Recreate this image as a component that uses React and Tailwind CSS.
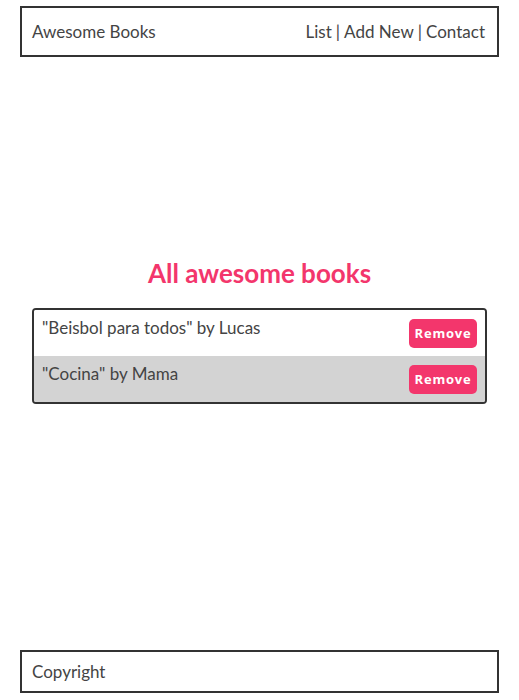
const BOOKS = [
  { title: "Beisbol para todos", author: "Lucas" },
  { title: "Cocina", author: "Mama" },
];

export default function App() {
  return (
    <div className="min-h-[700px] flex flex-col px-5 text-[#444] bg-white" style={{ fontFamily: "Lato, 'Open Sans', sans-serif" }}>
      <header className="mt-1.5 h-[51px] border-2 border-[#333] flex items-center justify-between pl-[10px] pr-[12px] text-[17px]">
        <span>Awesome Books</span>
        <nav className="flex items-center gap-[4px]">
          <a href="#">List</a>
          <span>|</span>
          <a href="#">Add New</a>
          <span>|</span>
          <a href="#">Contact</a>
        </nav>
      </header>

      <main className="flex-1 flex flex-col items-center pt-[200px] px-3">
        <h1 className="text-[26px] leading-8 font-bold text-[#f3366c]">All awesome books</h1>
        <ul className="mt-[19px] w-full border-2 border-[#333] rounded-[4px] overflow-hidden">
          {BOOKS.map((b, i) => (
            <li key={b.title} className={`flex items-start justify-between px-2 py-2 h-[46px] ${i % 2 ? "bg-[#d3d3d3]" : "bg-white"}`}>
              <p className="text-[17px] leading-6 -mt-[2px]">"{b.title}" by {b.author}</p>
              <button className="mt-px h-[29px] w-[68px] rounded-[5px] bg-[#f3366c] text-white text-[13px] font-bold tracking-[0.8px]" style={{ fontFamily: "'Open Sans', sans-serif" }}>
                Remove
              </button>
            </li>
          ))}
        </ul>
      </main>

      <footer className="mb-[7px] h-[43px] border-2 border-[#333] flex items-center pl-[10px] text-[17px]">
        Copyright
      </footer>
    </div>
  );
}
